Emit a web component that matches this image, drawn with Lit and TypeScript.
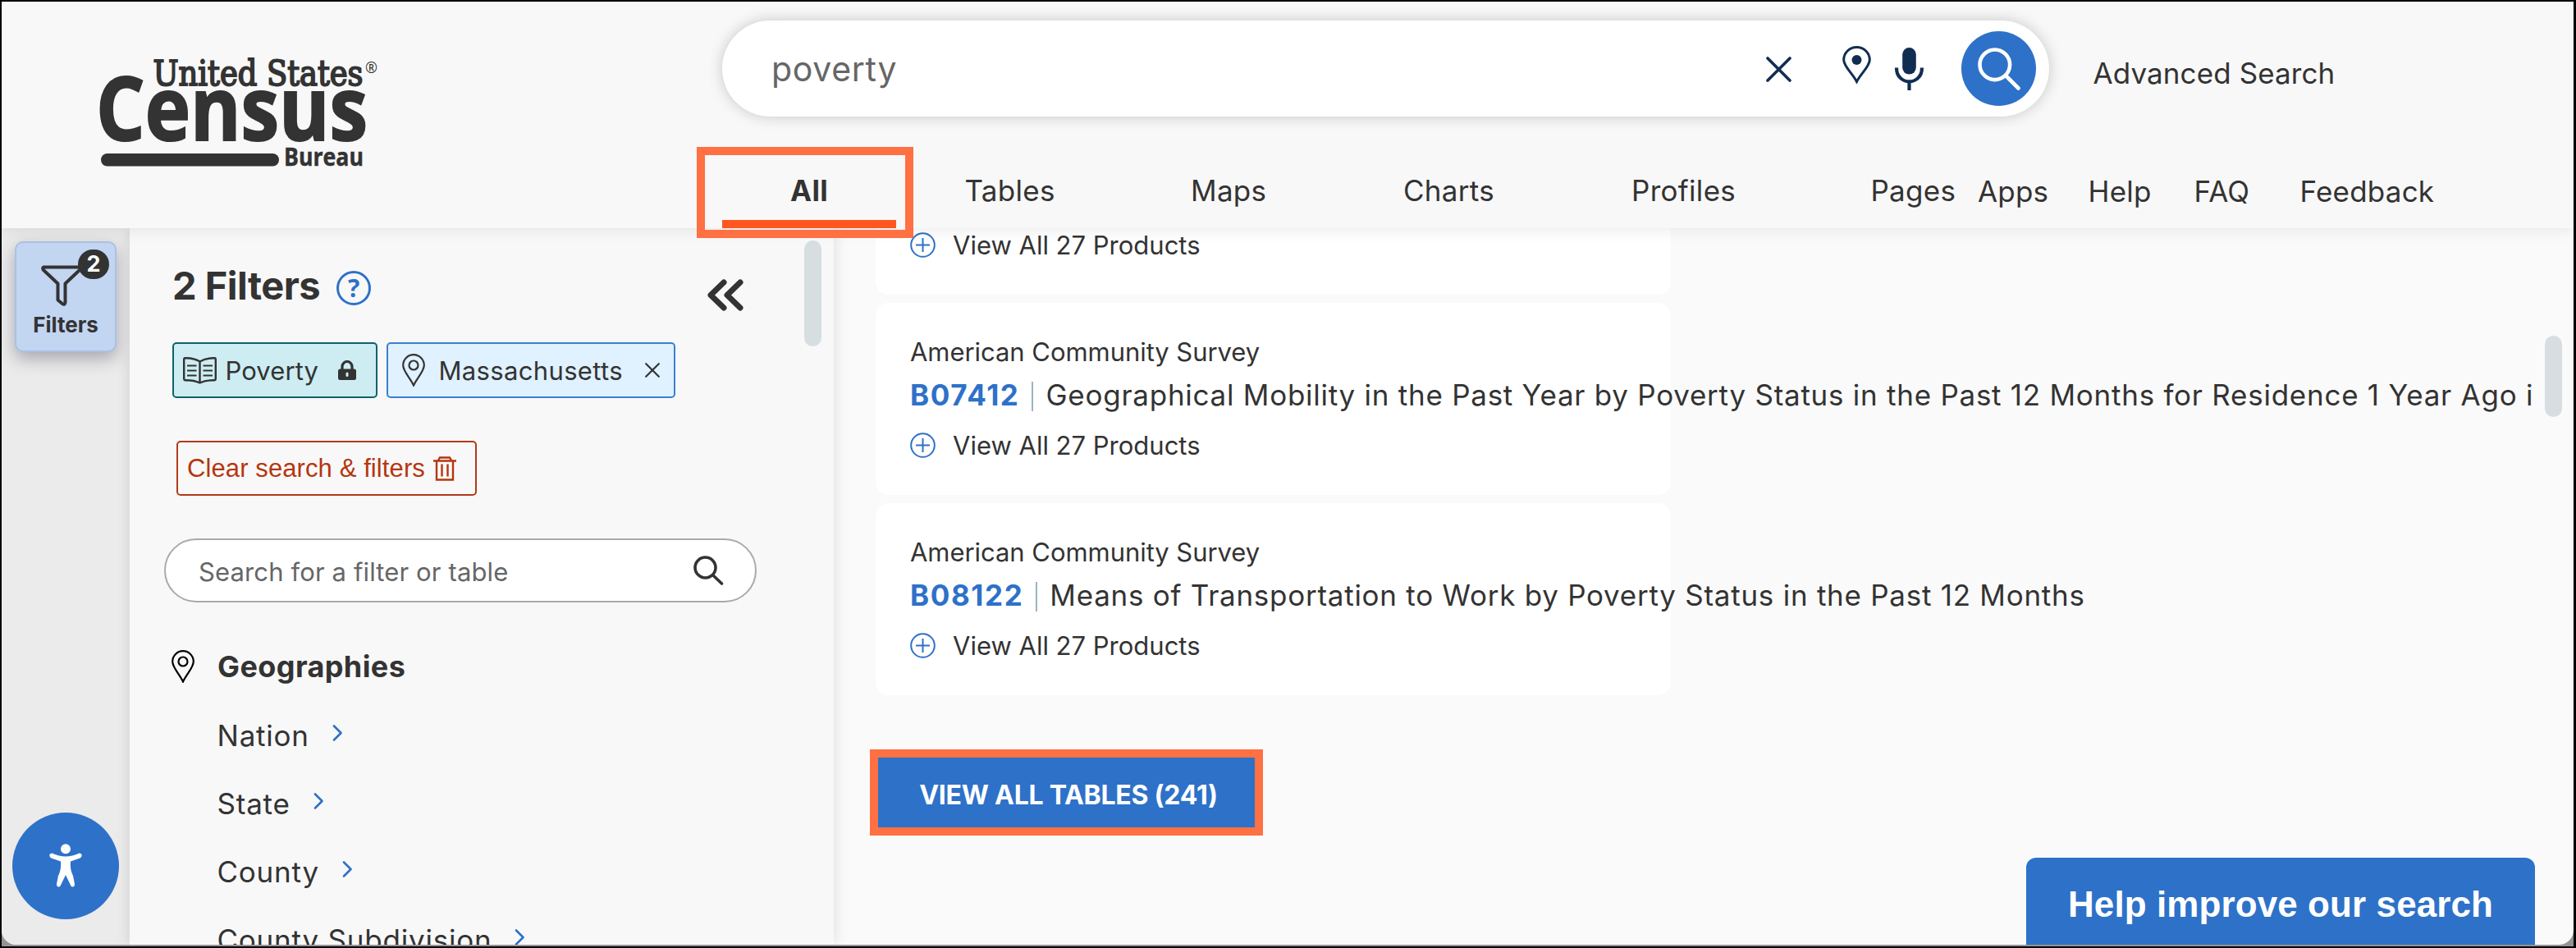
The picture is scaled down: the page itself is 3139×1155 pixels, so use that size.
import { html, css, LitElement } from 'lit';
import { customElement, property } from 'lit/decorators.js';

const pinPath = 'M14 38.5C10 29.5 1.2 21.5 1.2 14A12.8 12.8 0 0 1 26.8 14C26.8 21.5 18 29.5 14 38.5Z';

@customElement('census-logo')
export class CensusLogo extends LitElement {
  static styles = css`
    :host {
      display: block;
    }
    svg {
      display: block;
      width: 360px;
      height: 150px;
      fill: #333;
    }
    .slab {
      font: 43px 'DejaVu Serif Condensed', 'DejaVu Serif', serif;
      stroke: #333;
      stroke-width: 1.8;
    }
    .census {
      font: 700 107px 'Open Sans', sans-serif;
      stroke: #333;
      stroke-width: 2;
    }
    .bureau {
      font: 700 31px 'Open Sans', sans-serif;
      stroke: #333;
      stroke-width: 0.5;
    }
    .mark {
      font: 18px 'Open Sans', sans-serif;
    }
  `;

  render() {
    return html`
      <svg viewBox="110 60 360 150" role="img" aria-label="United States Census Bureau">
        <text class="slab" x="186.5" y="103.5" textLength="256" lengthAdjust="spacingAndGlyphs">United States</text>
        <text class="mark" x="445" y="89">®</text>
        <text class="census" x="117" y="171" textLength="331" lengthAdjust="spacingAndGlyphs">Census</text>
        <rect x="123" y="187" width="217" height="15.5" rx="7.7" />
        <text class="bureau" x="346" y="202" textLength="97" lengthAdjust="spacingAndGlyphs">Bureau</text>
      </svg>
    `;
  }
}

@customElement('app-header')
export class AppHeader extends LitElement {
  static styles = css`
    :host {
      display: flex;
      position: relative;
      z-index: 2;
      height: 276px;
      background: #f8f8f8;
      box-shadow: 0 0 20px rgba(0, 0, 0, 0.1);
      font: 35px/42px 'Inter', sans-serif;
      color: #333;
    }
    svg {
      display: block;
      flex: none;
      fill: none;
    }
    census-logo {
      box-sizing: border-box;
      width: 847px;
      padding: 58px 0 0 108px;
    }
    .top {
      display: flex;
      padding: 23px 0 0 31px;
    }
    .search {
      box-sizing: border-box;
      display: flex;
      align-items: center;
      width: 1617px;
      height: 117px;
      padding: 0 16px 0 60px;
      border-radius: 59px;
      background: #fff;
      box-shadow: 0 0 18px rgba(0, 0, 0, 0.2);
      color: #666;
    }
    .query {
      flex: 1;
      font-size: 41px;
      letter-spacing: 0.7px;
    }
    .clear {
      margin: 2px 62px 0 0;
    }
    .pin {
      margin: 0 29px 10px 0;
    }
    .mic {
      margin-right: 46px;
    }
    .go {
      display: flex;
      align-items: center;
      justify-content: center;
      width: 91px;
      height: 91px;
      border-radius: 50%;
      background: #2e71c8;
    }
    .advanced {
      padding: 43.3px 0 0 53.5px;
      letter-spacing: 0.1px;
    }
    nav {
      display: grid;
      grid-template-columns: 326.5px 275.5px 259px 278px 291.4px 130.6px 134.500px 129px 129px auto;
      height: 99px;
      margin-top: 37px;
      letter-spacing: 0.3px;
    }
    nav span {
      padding-top: 32.3px;
    }
    nav .link {
      padding-top: 33.3px;
      letter-spacing: 0.2px;
    }
    .active {
      box-sizing: border-box;
      display: flex;
      flex-direction: column;
      justify-content: space-between;
      width: 264px;
      height: 111px;
      padding: 22.3px 11px 2px 21px;
      border: 10px solid #ff7043;
      font-weight: 700;
      text-align: center;
    }
    .active::after {
      content: '';
      height: 10px;
      background: #ff5622;
    }
  `;

  tabs = ['Tables', 'Maps', 'Charts', 'Profiles', 'Pages'];
  links = ['Apps', 'Help', 'FAQ', 'Feedback'];

  render() {
    return html`
      <census-logo></census-logo>
      <div>
        <div class="top">
          <div class="search">
            <div class="query">poverty</div>
            <svg class="clear" width="31" height="31" stroke="#112e51" stroke-width="3.6" stroke-linecap="round">
              <path d="M2 2L29 29M29 2L2 29" />
            </svg>
            <svg class="pin" width="35" height="46" stroke="#112e51" stroke-width="3">
              <path d="M17.5 43.5C12.5 33.5 1.7 25 1.7 17A15.8 15.5 0 0 1 33.3 17C33.3 25 22.5 33.5 17.5 43.5Z" />
              <circle cx="17.5" cy="17" r="6" fill="#112e51" stroke="none" />
            </svg>
            <svg class="mic" width="35" height="52" stroke="#112e51" stroke-width="4.2">
              <rect x="9.2" width="16.6" height="32.6" rx="8.3" fill="#112e51" stroke="none" />
              <path d="M2.1 24.5V26A15.4 15.4 0 0 0 32.9 26V24.5M17.5 41V52" />
            </svg>
            <div class="go">
              <svg width="52" height="52" stroke="#fff" stroke-width="4.6" stroke-linecap="round">
                <circle cx="20.8" cy="20.8" r="18.3" />
                <path d="M34.5 34.5L49.5 49.5" />
              </svg>
            </div>
          </div>
          <div class="advanced">Advanced Search</div>
        </div>
        <nav>
          <div class="active">All</div>
          ${this.tabs.map(tab => html`<span>${tab}</span>`)}
          ${this.links.map(link => html`<span class="link">${link}</span>`)}
        </nav>
      </div>
    `;
  }
}

@customElement('side-rail')
export class SideRail extends LitElement {
  static styles = css`
    :host {
      box-sizing: border-box;
      display: flex;
      flex-direction: column;
      justify-content: space-between;
      flex: none;
      width: 156px;
      padding: 16px 0 31px;
      background: #ebebeb;
    }
    .filters {
      box-sizing: border-box;
      display: flex;
      flex-direction: column;
      align-items: center;
      position: relative;
      width: 124px;
      height: 135px;
      margin-left: 16px;
      padding-top: 26px;
      border: 2px solid #abc2e2;
      border-radius: 10px;
      background: #c2d5f1;
      box-shadow: 0 8px 20px rgba(40, 40, 70, 0.35);
      font: 700 26px/30px 'Inter', sans-serif;
      color: #333;
    }
    .filters svg {
      margin: 0 10px 6.5px 0;
    }
    svg {
      display: block;
    }
    .badge {
      position: absolute;
      left: 75px;
      top: 8px;
      width: 38px;
      height: 36px;
      border-radius: 18px;
      background: #333;
      color: #fff;
      font-size: 27px;
      line-height: 35px;
      text-align: center;
    }
    .access {
      display: flex;
      align-items: center;
      justify-content: center;
      width: 130px;
      height: 130px;
      margin-left: 13px;
      border-radius: 50%;
      background: #2e71c8;
    }
  `;

  render() {
    return html`
      <div class="filters">
        <svg width="50" height="52" fill="none" stroke="#333" stroke-width="4" stroke-linejoin="round">
          <path d="M3 3.5H47Q48.5 5 47 7L29.5 23.5V46.5Q29 49.5 26.5 48.5L20.5 43.5V23.5L3 7Q1.5 5 3 3.5Z" />
        </svg>
        Filters
        <div class="badge">2</div>
      </div>
      <div class="access">
        <svg width="40" height="54" fill="#fff">
          <circle cx="20" cy="6.2" r="6" />
          <path
            d="M3.5 11.5Q12 15.5 20 15.5T36.5 11.5Q39.5 11.5 39.7 14.5Q39.5 16.5 37.5 17.5L26 21.5Q25 31 29 39L31 49Q31 52.5 28.5 52.5Q26.5 52.5 25.8 50L20 38L14.2 50Q13.5 52.5 11.5 52.5Q9 52.5 9 49L11 39Q15 31 14 21.5L2.5 17.5Q.5 16.5.3 14.5Q.5 11.5 3.5 11.5Z"
          />
        </svg>
      </div>
    `;
  }
}

@customElement('filter-panel')
export class FilterPanel extends LitElement {
  static styles = css`
    :host {
      box-sizing: border-box;
      display: block;
      flex: none;
      position: relative;
      z-index: 1;
      width: 858px;
      padding: 42px 0 0 43px;
      background: #f8f8f8;
      box-shadow: 0 0 16px rgba(0, 0, 0, 0.13);
      font: 31px/38px 'Inter', sans-serif;
      color: #333;
    }
    svg {
      display: block;
      flex: none;
      fill: none;
    }
    .title {
      display: flex;
      align-items: flex-start;
      width: 697px;
      height: 56px;
      margin-left: 9px;
    }
    h2 {
      margin: 0;
      font: 700 47px/56px 'Inter', sans-serif;
      letter-spacing: -0.5px;
    }
    .help {
      box-sizing: border-box;
      width: 42px;
      height: 42px;
      margin: 10px 0 0 20px;
      border: 3.5px solid #2e71c8;
      border-radius: 50%;
      color: #2e71c8;
      font: 700 30px/35px 'Open Sans', sans-serif;
      text-align: center;
    }
    .collapse {
      margin: 20px 0 0 auto;
    }
    .chips {
      display: flex;
      gap: 11px;
      margin: 41px 0 52px 9px;
    }
    .chip {
      box-sizing: border-box;
      display: flex;
      align-items: center;
      height: 68px;
      border: 2px solid #3a7fd0;
      border-radius: 5px;
      background: #e0f1ff;
    }
    .chip span {
      padding-top: 2px;
    }
    .topic {
      width: 250px;
      padding-left: 10.5px;
      border-color: #0e626c;
      background: #cdedf2;
    }
    .topic span {
      margin: 0 24px 0 11px;
      letter-spacing: 0.1px;
    }
    .geo {
      width: 352px;
      padding-left: 17px;
    }
    .geo span {
      margin-left: 16.5px;
      letter-spacing: 0.34px;
    }
    .geo .remove {
      margin: 0 17.5px 0 auto;
    }
    .clear {
      box-sizing: border-box;
      display: flex;
      align-items: center;
      justify-content: space-between;
      width: 366px;
      height: 67px;
      margin-left: 14px;
      padding: 0 23px 0 11px;
      border: 2px solid #b03a18;
      border-radius: 5px;
      color: #b5360f;
      font-family: 'Liberation Sans', Arial, sans-serif;
      letter-spacing: 0.1px;
    }
    .lookup {
      box-sizing: border-box;
      display: flex;
      align-items: center;
      justify-content: space-between;
      width: 722px;
      height: 78px;
      margin: 52px 0 56px -1px;
      padding: 0 38px 0 40px;
      border: 2px solid #aaa;
      border-radius: 39px;
      background: #fff;
      color: #666;
      letter-spacing: 0.13px;
    }
    .lookup span {
      padding-top: 3px;
    }
    h3 {
      display: flex;
      align-items: center;
      gap: 28px;
      margin: 0 0 20.5px 8px;
      font: 700 36px/44px 'Inter', sans-serif;
      letter-spacing: 0.4px;
    }
    .level {
      display: flex;
      align-items: center;
      gap: 28px;
      height: 83px;
      margin-left: 63.5px;
      font-size: 35px;
      letter-spacing: 0.78px;
    }
    .level svg {
      margin-bottom: 7px;
    }
    .thumb {
      position: absolute;
      right: 15px;
      top: 15px;
      width: 21px;
      height: 129px;
      border-radius: 11px;
      background: #d7dee1;
    }
  `;

  levels = ['Nation', 'State', 'County', 'County Subdivision'];

  pin(color: string) {
    return html`
      <svg width="28" height="40" stroke=${color} stroke-width="2.2">
        <path d=${pinPath} />
        <circle cx="14" cy="14" r="5.5" />
      </svg>
    `;
  }

  render() {
    return html`
      <div class="title">
        <h2>2 Filters</h2>
        <div class="help">?</div>
        <svg class="collapse" width="46" height="39" stroke="#333" stroke-width="7" stroke-linecap="round" stroke-linejoin="round">
          <path d="M21 4L5 19.5L21 35M41 4L25 19.5L41 35" />
        </svg>
      </div>
      <div class="chips">
        <div class="chip topic">
          <svg width="41" height="33" stroke="#333" stroke-width="2.4" stroke-linejoin="round">
            <path d="M20.5 5.5Q13 1 2.5 1.2Q1.2 1.3 1.2 3V26.5Q1.2 28 2.5 28.3Q13 28 20.5 31.5Q28 28 38.5 28.3Q39.8 28 39.8 26.5V3Q39.8 1.3 38.5 1.2Q28 1 20.5 5.5ZM20.5 5.5V31.5" />
            <path d="M5 10.5H16.5M5 16.5H16.5M5 22.5H16.5M24.5 10.5H36M24.5 16.5H36M24.5 22.5H36" stroke-width="2" />
          </svg>
          <span>Poverty</span>
          <svg width="22" height="24">
            <path d="M5 11V7.5A6 6 0 0 1 17 7.5V11" stroke="#333" stroke-width="3.2" />
            <rect y="10.5" width="22" height="13.5" rx="2.5" fill="#333" />
            <rect x="9.5" y="14.5" width="3" height="5.5" rx="1.5" fill="#cdedf2" />
          </svg>
        </div>
        <div class="chip geo">
          ${this.pin('#333')}
          <span>Massachusetts</span>
          <svg class="remove" width="18" height="18" stroke="#333" stroke-width="2.2" stroke-linecap="round">
            <path d="M1.2 1.2L16.8 16.8M16.8 1.2L1.2 16.8" />
          </svg>
        </div>
      </div>
      <div class="clear">
        Clear search &amp; filters
        <svg width="28" height="30" stroke="#b5360f" stroke-width="2.4">
          <path d="M0 5.5H28M6 5L8 1.5H20L22 5M4 5.5V28.5H24V5.5M10.5 9.5V24.5M17.5 9.5V24.5" />
        </svg>
      </div>
      <div class="lookup">
        <span>Search for a filter or table</span>
        <svg width="37" height="36" stroke="#333" stroke-width="3.6" stroke-linecap="round">
          <circle cx="14.5" cy="14.5" r="12.5" />
          <path d="M24 24L34.5 34" />
        </svg>
      </div>
      <h3>${this.pin('#000')}Geographies</h3>
      ${this.levels.map(
        level => html`
          <div class="level">
            ${level}
            <svg width="13" height="20" stroke="#2e71c8" stroke-width="2.6" stroke-linecap="round" stroke-linejoin="round">
              <path d="M2 1.5L10.5 10L2 18.5" />
            </svg>
          </div>
        `
      )}
      <div class="thumb"></div>
    `;
  }
}

@customElement('result-card')
export class ResultCard extends LitElement {
  static styles = css`
    :host {
      box-sizing: border-box;
      display: flex;
      flex-direction: column;
      justify-content: flex-end;
      width: 969px;
      height: 234px;
      padding: 0 0 41px 42px;
      border-radius: 16px;
      background: #fff;
      white-space: nowrap;
    }
    .survey {
      letter-spacing: -0.05px;
    }
    .name {
      display: flex;
      margin: 12.3px 0 21px;
      font-size: 35px;
      line-height: 42px;
      letter-spacing: 0.74px;
    }
    .code {
      padding-right: 15px;
      color: #2e71c8;
      font-weight: 700;
      letter-spacing: 1.6px;
    }
    .name i {
      flex: none;
      width: 2px;
      height: 36px;
      margin: 5px 15px 0 0;
      background: #9ab4c0;
    }
    .products {
      display: flex;
      align-items: center;
      gap: 21px;
    }
    .products span {
      padding-top: 1px;
    }
    svg {
      display: block;
    }
  `;

  @property() code = '';
  @property() name = '';

  render() {
    return html`
      ${this.code
        ? html`
            <div class="survey">American Community Survey</div>
            <div class="name"><span class="code">${this.code}</span><i></i>${this.name}</div>
          `
        : ''}
      <div class="products">
        <svg width="31" height="31" fill="none" stroke="#2e71c8" stroke-width="2">
          <circle cx="15.5" cy="15.5" r="14.3" />
          <path d="M7 15.5H24M15.5 7V24" />
        </svg>
        <span>View All 27 Products</span>
      </div>
    `;
  }
}

@customElement('app-root')
export class AppRoot extends LitElement {
  static styles = css`
    :host {
      box-sizing: border-box;
      display: block;
      width: 3139px;
      height: 1155px;
      padding: 2px 3px 2px 2px;
      background: #000;
    }
    .backdrop {
      height: 1151px;
      background: #949494;
    }
    .window {
      position: relative;
      height: 1149px;
      border-radius: 0 0 18px 18px;
      background: #fafafa;
      overflow: hidden;
    }
    .body {
      display: flex;
      height: 873px;
    }
    .results {
      flex: 1;
      min-width: 0;
      padding-left: 51px;
      font: 31px/38px 'Inter', sans-serif;
      color: #333;
    }
    .cards {
      display: flex;
      flex-direction: column;
      gap: 10px;
      margin-top: -153px;
    }
    .all {
      box-sizing: border-box;
      display: flex;
      align-items: center;
      justify-content: center;
      width: 479px;
      height: 105px;
      margin: 66px 0 0 -7px;
      padding: 7px 0 0 5px;
      border: 10px solid #ff7043;
      background: #2e71c8;
      color: #fff;
      font-size: 32px;
      font-weight: 700;
      letter-spacing: -0.25px;
    }
    .thumb {
      position: absolute;
      right: 14px;
      top: 407px;
      width: 21px;
      height: 99px;
      border-radius: 11px;
      background: #d7dee1;
    }
    .feedback {
      box-sizing: border-box;
      position: absolute;
      right: 47px;
      bottom: 0;
      width: 620px;
      height: 106px;
      padding-top: 7px;
      border-radius: 12px 12px 0 0;
      background: #2e71c8;
      color: #fff;
      font: 700 44px/99px 'Liberation Sans', Arial, sans-serif;
      letter-spacing: 0.09px;
      text-align: center;
    }
  `;

  tables = [
    { code: '', name: '' },
    {
      code: 'B07412',
      name: 'Geographical Mobility in the Past Year by Poverty Status in the Past 12 Months for Residence 1 Year Ago i',
    },
    { code: 'B08122', name: 'Means of Transportation to Work by Poverty Status in the Past 12 Months' },
  ];

  render() {
    return html`
      <div class="backdrop">
        <div class="window">
          <app-header></app-header>
          <div class="body">
            <side-rail></side-rail>
            <filter-panel></filter-panel>
            <div class="results">
              <div class="cards">
                ${this.tables.map(
                  table => html`<result-card .code=${table.code} .name=${table.name}></result-card>`
                )}
              </div>
              <div class="all">VIEW ALL TABLES (241)</div>
            </div>
          </div>
          <div class="thumb"></div>
          <div class="feedback">Help improve our search</div>
        </div>
      </div>
    `;
  }
}
